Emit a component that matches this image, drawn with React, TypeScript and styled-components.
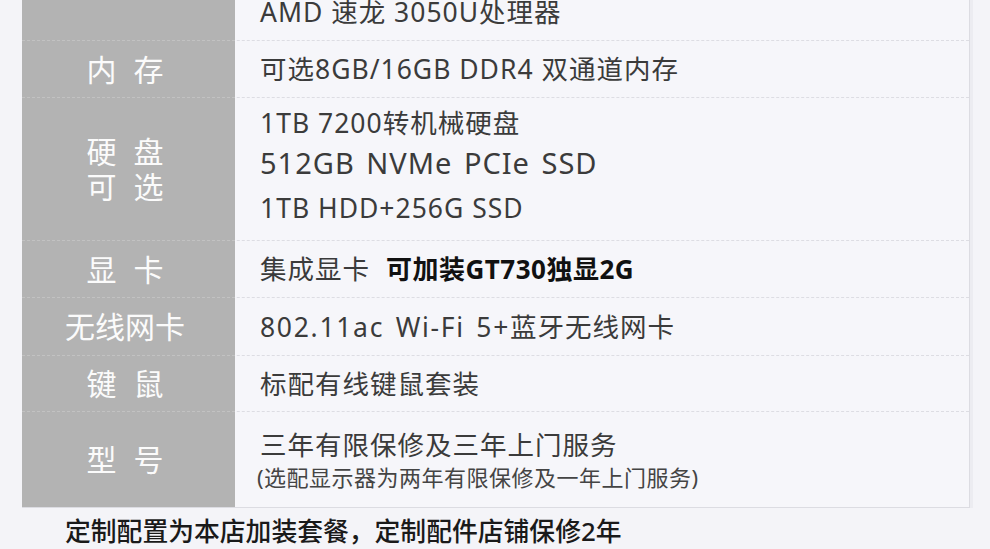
import React from "react";
import styled, { createGlobalStyle } from "styled-components";

const Global = createGlobalStyle`
  html, body { margin: 0; padding: 0; background: #f4f4f8; overflow: hidden; }
  body { font-family: "Noto Sans", "Noto Sans CJK SC", sans-serif; }
`;

const Page = styled.div`
  width: 990px;
  height: 549px;
  overflow: hidden;
  background: #f4f4f8;
`;

const Table = styled.div`
  margin: -17px 0 0 22px;
  width: 947px;
  border-right: 1px solid #dcdce2;
  border-bottom: 1px solid #dcdce2;
  background: #f6f6fa;
  box-shadow: 3px 0 0 #ececf1;
`;

const Row = styled.div<{ $h: number; $first?: boolean }>`
  display: grid;
  grid-template-columns: 213px 1fr;
  height: ${(p) => p.$h}px;
  box-sizing: border-box;
  border-top: ${(p) => (p.$first ? "none" : "1px dashed #dddde3")};
`;

const Label = styled.div<{ $first?: boolean }>`
  background: #b3b3b3;
  color: #fbfbfb;
  font-size: 30px;
  word-spacing: 9px;
  line-height: 35px;
  display: flex;
  flex-direction: column;
  align-items: center;
  justify-content: center;
  padding-right: 7px;
  margin-top: ${(p) => (p.$first ? "0" : "-1px")};
  border-top: ${(p) => (p.$first ? "none" : "1px dashed #c2c2c2")};
`;

const Value = styled.div`
  display: flex;
  flex-direction: column;
  justify-content: center;
  padding-left: 25px;
  color: #3b3b3b;
  font-size: 26.5px;
  letter-spacing: 1px;
  line-height: 42px;
`;

const DiskList = styled.div`
  padding-bottom: 7px;
`;

const Line = styled.div<{ $big?: boolean }>`
  line-height: 40px;
  font-size: ${(p) => (p.$big ? "29px" : "26.5px")};
  word-spacing: ${(p) => (p.$big ? "3px" : "0")};
  margin-bottom: ${(p) => (p.$big ? "5px" : "0")};
`;

const Wide = styled.span`
  word-spacing: 3px;
  letter-spacing: 1.7px;
`;

const Strong = styled.span`
  color: #111;
  font-size: 26px;
  font-weight: 700;
  letter-spacing: 0.5px;
  margin-left: 16px;
`;

const Main = styled.div`
  line-height: 34px;
`;

const Note = styled.div`
  font-size: 22px;
  line-height: 30px;
  letter-spacing: 0.5px;
  color: #444;
  margin-left: -3px;
`;

const Footer = styled.div`
  padding: 8px 0 0 65px;
  font-size: 25.8px;
  font-weight: 500;
  color: #1a1a1a;
  line-height: 30px;
`;

const App: React.FC = () => (
  <Page>
    <Global />
    <Table>
      <Row $h={57} $first>
        <Label $first />
        <Value>AMD 速龙 3050U处理器</Value>
      </Row>
      <Row $h={57}>
        <Label>内 存</Label>
        <Value>可选8GB/16GB DDR4 双通道内存</Value>
      </Row>
      <Row $h={143}>
        <Label>
          <div>硬 盘</div>
          <div>可 选</div>
        </Label>
        <Value>
          <DiskList>
            <Line>1TB 7200转机械硬盘</Line>
            <Line $big>512GB NVMe PCIe SSD</Line>
            <Line>1TB HDD+256G SSD</Line>
          </DiskList>
        </Value>
      </Row>
      <Row $h={57}>
        <Label>显 卡</Label>
        <Value>
          <div>
            集成显卡<Strong>可加装GT730独显2G</Strong>
          </div>
        </Value>
      </Row>
      <Row $h={58}>
        <Label>无线网卡</Label>
        <Value>
          <div>
            <Wide>802.11ac Wi-Fi 5+</Wide>蓝牙无线网卡
          </div>
        </Value>
      </Row>
      <Row $h={56}>
        <Label>键 鼠</Label>
        <Value>标配有线键鼠套装</Value>
      </Row>
      <Row $h={96}>
        <Label>型 号</Label>
        <Value>
          <Main>三年有限保修及三年上门服务</Main>
          <Note>(选配显示器为两年有限保修及一年上门服务)</Note>
        </Value>
      </Row>
    </Table>
    <Footer>定制配置为本店加装套餐，定制配件店铺保修2年</Footer>
  </Page>
);

export default App;
